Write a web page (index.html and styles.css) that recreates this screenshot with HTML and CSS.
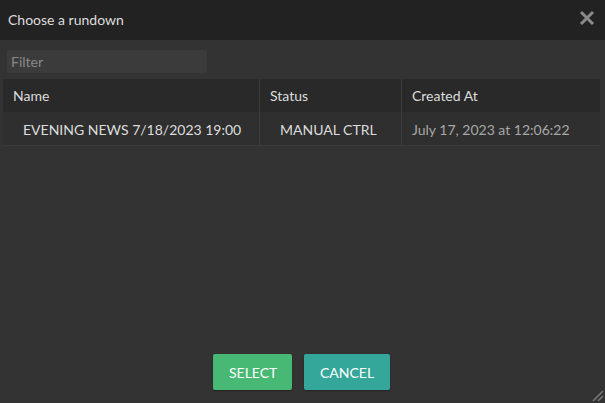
FILE: index.html
```html
<!DOCTYPE html>
<html lang="en">
  <head>
    <meta charset="UTF-8" />
    <title>Choose a rundown</title>
    <link rel="stylesheet" href="styles.css">
  </head>
  <body>
    <div id="dialog">
      <div id="dialog-header">
        <span id="dialog-title">Choose a rundown</span>
        <span id="dialog-close">
          <svg width="16" height="16" viewBox="0 0 16 16">
            <path d="M2 2 L14 14 M14 2 L2 14" stroke="#8a8a8a" stroke-width="3" />
          </svg>
        </span>
      </div>
      <div id="dialog-body">
        <input type="text" id="filter" placeholder="Filter" />
        <table id="rundowns">
          <thead>
            <tr>
              <th class="col-name">Name</th>
              <th class="col-status">Status</th>
              <th class="col-created">Created At</th>
            </tr>
          </thead>
          <tbody>
            <tr>
              <td class="cell-name">EVENING NEWS 7/18/2023 19:00</td>
              <td class="cell-status">MANUAL CTRL</td>
              <td class="cell-created">July 17, 2023 at 12:06:22</td>
            </tr>
          </tbody>
        </table>
      </div>
      <div id="dialog-footer">
        <button class="btn btn-select">SELECT</button>
        <button class="btn btn-cancel">CANCEL</button>
      </div>
      <svg id="resize" width="14" height="14" viewBox="0 0 14 14">
        <path d="M13 3 L3 13 M13 8 L8 13" stroke="#777" stroke-width="1.6" />
      </svg>
    </div>
  </body>
</html>
```

FILE: styles.css
```css
html,
body {
  margin: 0;
  height: 100%;
  background-color: #333;
  font-family: Lato, "Open Sans", sans-serif;
}

#dialog {
  position: relative;
  display: flex;
  flex-direction: column;
  height: 403px;
  background-color: #333;
}

#dialog-header {
  display: flex;
  align-items: center;
  justify-content: space-between;
  height: 40px;
  padding: 0 11px 0 8px;
  background-color: #222;
}

#dialog-title {
  color: #ddd;
  font-size: 14px;
  margin-top: -1px;
}

#dialog-close {
  display: flex;
  margin-top: -4px;
  margin-right: -1px;
}

#dialog-body {
  flex: 1;
  padding: 10px 5px 0 3px;
}

#filter {
  display: block;
  width: 200px;
  height: 23px;
  margin-left: 4px;
  padding: 0 4px;
  box-sizing: border-box;
  border: 0;
  border-radius: 2px;
  background-color: #3b3b3b;
  color: #ccc;
  font-family: Lato, sans-serif;
  font-size: 14px;
}

#filter::placeholder {
  color: #888;
}

#rundowns {
  width: 100%;
  margin-top: 6px;
  border-collapse: collapse;
  font-size: 14px;
}

#rundowns th {
  height: 32px;
  padding: 0 10px 1px;
  background-color: #292929;
  color: #ddd;
  font-weight: normal;
  text-align: left;
}

#rundowns td {
  height: 32px;
  padding: 1px 10px 0 20px;
  border-bottom: 1px solid #3b3b3b;
  color: #ddd;
  background-color: #2f2f2f;
}

#rundowns th + th,
#rundowns td + td {
  border-left: 1px solid #3d3d3d;
}

.col-name {
  width: 236px;
}

.col-status {
  width: 121px;
}

#rundowns .cell-created {
  padding-left: 10px;
  color: #a8a8a8;
}

#dialog-footer {
  display: flex;
  justify-content: center;
  gap: 12px;
  padding: 0 2px 13px 0;
}

.btn {
  height: 36px;
  padding: 0 16px;
  border: 0;
  border-radius: 2px;
  color: #fff;
  font-family: Lato, sans-serif;
  font-size: 14px;
  box-shadow: 0 1px 2px rgba(0, 0, 0, 0.3);
}

.btn-select {
  width: 79px;
  background-color: #48b975;
}

.btn-cancel {
  width: 86px;
  background-color: #34a79a;
}

#resize {
  position: absolute;
  right: 1px;
  bottom: 1px;
}
```
